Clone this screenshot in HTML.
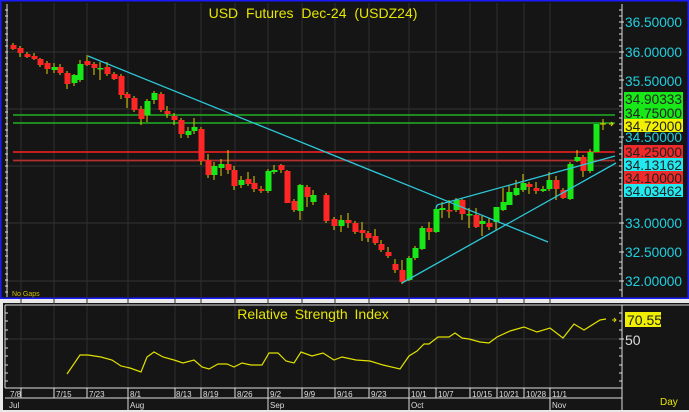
<!DOCTYPE html>
<html><head><meta charset="utf-8"><style>
html,body{margin:0;padding:0;background:#fff;}
svg{display:block;font-family:"Liberation Sans",sans-serif;}
</style></head><body>
<svg width="689" height="412" viewBox="0 0 689 412" xmlns="http://www.w3.org/2000/svg">
<rect x="0" y="0" width="689" height="412" fill="#151515"/>
<rect x="0.5" y="0.5" width="688" height="298" fill="none" stroke="#1a1aff" stroke-width="2"/>
<rect x="0" y="299" width="689" height="4" fill="#e8e8e8"/>
<rect x="0" y="410" width="689" height="2" fill="#e8e8e8"/>
<rect x="0" y="303" width="3" height="107" fill="#e8e8e8"/>
<g stroke="#333" stroke-width="1">
<line x1="5" y1="52" x2="620" y2="52"/><line x1="5" y1="109" x2="620" y2="109"/><line x1="5" y1="166" x2="620" y2="166"/><line x1="5" y1="223" x2="620" y2="223"/><line x1="5" y1="281" x2="620" y2="281"/>
<line x1="5" y1="339" x2="620" y2="339"/>
</g>
<g stroke="#2f2f2f" stroke-width="1">
<path d="M21 3V388M54 3V388M87 3V388M128 3V388M175 3V388M201 3V388M235 3V388M268 3V388M302 3V388M335 3V388M369 3V388M409 3V388M436 3V388M470 3V388M497 3V388M524 3V388M550 3V388"/>
</g>
<line x1="622" y1="4" x2="622" y2="297" stroke="#ddd"/>
<line x1="7" y1="4" x2="7" y2="297" stroke="#ddd"/>
<line x1="622" y1="305" x2="622" y2="410" stroke="#ddd"/>
<line x1="5" y1="305" x2="5" y2="388" stroke="#ddd"/>
<line x1="5" y1="388" x2="622" y2="388" stroke="#ddd"/>
<line x1="5" y1="305" x2="689" y2="305" stroke="#ddd"/>
<g stroke="#ddd">
<path d="M5 10h3M5 16h3M5 22h3M5 28h3M5 34h3M5 40h3M5 46h3M5 52h3M5 58h3M5 64h3M5 70h3M5 76h3M5 82h3M5 88h3M5 94h3M5 100h3M5 106h3M5 112h3M5 118h3M5 124h3M5 130h3M5 136h3M5 142h3M5 148h3M5 154h3M5 160h3M5 166h3M5 172h3M5 178h3M5 184h3M5 190h3M5 196h3M5 202h3M5 208h3M5 214h3M5 220h3M5 226h3M5 232h3M5 238h3M5 244h3M5 250h3M5 256h3M5 262h3M5 268h3M5 274h3M5 280h3M5 286h3M5 292h3"/>
<path d="M619 10h3M619 16h3M619 22h5M619 28h3M619 34h3M619 40h3M619 46h3M619 52h5M619 58h3M619 64h3M619 70h3M619 76h3M619 80h5M619 88h3M619 94h3M619 100h3M619 106h3M619 112h3M619 118h3M619 124h3M619 130h3M619 137h5M619 142h3M619 148h3M619 154h3M619 160h3M619 166h3M619 172h3M619 178h3M619 184h3M619 190h3M619 196h3M619 202h3M619 208h3M619 214h3M619 223h5M619 232h3M619 238h3M619 244h3M619 252h5M619 262h3M619 268h3M619 274h3M619 281h5M619 290h3"/>
<path d="M5 313h3M5 321h3M5 330h3M5 339h3M5 348h3M5 356h3M5 365h3M5 373h3M5 381h3M619 313h3M619 321h3M619 330h3M619 339h5M619 348h3M619 356h3M619 365h3M619 373h3M619 381h3"/>
</g>
<line x1="13" y1="115" x2="615" y2="115" stroke="#22b022" stroke-width="1.5"/>
<line x1="13" y1="123" x2="615" y2="123" stroke="#22b022" stroke-width="1.5"/>
<line x1="13" y1="152" x2="615" y2="152" stroke="#ff2020" stroke-width="1.5"/>
<line x1="13" y1="160.5" x2="615" y2="160.5" stroke="#b03030" stroke-width="1.8"/>
<g stroke="#e0d000" stroke-width="1">
<path d="M13 43V50M20 46V57M27 52V58M34 53V60M40 58V67M47 61V74M54 63V73M60 64V75M67 71V89M74 74V86M80 60V82M87 55V66M94 62V75M100 62V80M107 62V76M114 72V80M121 74V99M127 92V108M134 96V112M141 106V125M147 99V122M154 91V104M161 92V112M167 106V118M174 113V125M181 118V138M188 127V138M194 118V134M201 127V165M208 154V178M214 162V180M221 159V176M228 150V174M234 166V190M241 176V188M248 172V186M254 176V192M261 186V193M268 169V193M274 165V174M281 164V173M287 170V203M294 199V212M300 184V220M307 185V207M313 190V205M326 193V223M334 217V230M341 215V232M348 213V228M355 221V234M362 222V241M368 231V242M375 229V245M381 240V252M388 247V258M395 259V273M402 260V284M409 256V281M415 246V260M422 226V250M429 222V240M436 207V233M442 202V218M449 200V218M456 198V212M462 199V220M469 208V228M476 208V228M482 216V236M489 218V230M496 207V230M503 188V211M509 186V205M516 180V196M523 174V192M529 182V194M536 182V194M543 186V192M549 172V191M556 176V200M563 188V199M570 162V200M577 150V162M583 155V177M590 149V173M596 124V152M603 119V130"/>
</g>
<g fill="#ff2626">
<rect x="10.5" y="45" width="6" height="4"/><rect x="17.5" y="48" width="6" height="5"/><rect x="24.5" y="54" width="6" height="3"/><rect x="31.5" y="56" width="6" height="3"/><rect x="37.5" y="59" width="6" height="6"/><rect x="44.5" y="63" width="6" height="6"/><rect x="57.5" y="67" width="6" height="6"/><rect x="64.5" y="73" width="6" height="11"/><rect x="84.5" y="61" width="6" height="4"/><rect x="91.5" y="64" width="6" height="4"/><rect x="104.5" y="67" width="6" height="7"/><rect x="111.5" y="74" width="6" height="5"/><rect x="118.5" y="76" width="6" height="19"/><rect x="124.5" y="94" width="6" height="4"/><rect x="131.5" y="98" width="6" height="12"/><rect x="138.5" y="109" width="6" height="10"/><rect x="158.5" y="94" width="6" height="16"/><rect x="164.5" y="111" width="6" height="3"/><rect x="171.5" y="116" width="6" height="4"/><rect x="178.5" y="120" width="6" height="14"/><rect x="198.5" y="129" width="6" height="32"/><rect x="205.5" y="160" width="6" height="15"/><rect x="225.5" y="164" width="6" height="6"/><rect x="231.5" y="170" width="6" height="16"/><rect x="245.5" y="179" width="6" height="5"/><rect x="251.5" y="183" width="6" height="6"/><rect x="258.5" y="189" width="6" height="2"/><rect x="278.5" y="165" width="6" height="5"/><rect x="284.5" y="171" width="6" height="32"/><rect x="291.5" y="201" width="6" height="9"/><rect x="304.5" y="187" width="6" height="10"/><rect x="323.5" y="195" width="6" height="26"/><rect x="331.5" y="219" width="6" height="7"/><rect x="345.5" y="220" width="6" height="3"/><rect x="352.5" y="223" width="6" height="9"/><rect x="359.5" y="230" width="6" height="3"/><rect x="365.5" y="233" width="6" height="5"/><rect x="372.5" y="236" width="6" height="7"/><rect x="378.5" y="244" width="6" height="6"/><rect x="385.5" y="252" width="6" height="4"/><rect x="392.5" y="264" width="6" height="6"/><rect x="399.5" y="270" width="6" height="12"/><rect x="426.5" y="228" width="6" height="4"/><rect x="446.5" y="210" width="6" height="1.5"/><rect x="459.5" y="200" width="6" height="14"/><rect x="473.5" y="215" width="6" height="12"/><rect x="486.5" y="223" width="6" height="4"/><rect x="526.5" y="184" width="6" height="3"/><rect x="533.5" y="188" width="6" height="3"/><rect x="553.5" y="180" width="6" height="9"/><rect x="560.5" y="190" width="6" height="8"/><rect x="580.5" y="157" width="6" height="14"/>
</g>
<g fill="#18e818">
<rect x="51.5" y="67" width="6" height="3"/><rect x="71.5" y="75" width="6" height="8"/><rect x="77.5" y="64" width="6" height="16"/><rect x="97.5" y="68" width="6" height="1.5"/><rect x="144.5" y="101" width="6" height="14"/><rect x="151.5" y="93" width="6" height="7"/><rect x="185.5" y="131" width="6" height="4"/><rect x="191.5" y="127" width="6" height="4"/><rect x="211.5" y="166" width="6" height="9"/><rect x="218.5" y="164" width="6" height="4"/><rect x="238.5" y="180" width="6" height="5"/><rect x="265.5" y="171" width="6" height="20"/><rect x="271.5" y="170" width="6" height="2"/><rect x="297.5" y="185" width="6" height="26"/><rect x="310.5" y="195" width="6" height="7"/><rect x="338.5" y="220" width="6" height="6"/><rect x="406.5" y="258" width="6" height="22"/><rect x="412.5" y="248" width="6" height="10"/><rect x="419.5" y="228" width="6" height="21"/><rect x="433.5" y="209" width="6" height="23"/><rect x="439.5" y="208" width="6" height="2"/><rect x="453.5" y="200" width="6" height="10"/><rect x="466.5" y="214" width="6" height="1.5"/><rect x="479.5" y="221" width="6" height="3"/><rect x="493.5" y="207" width="6" height="15"/><rect x="500.5" y="202" width="6" height="8"/><rect x="506.5" y="192" width="6" height="13"/><rect x="513.5" y="188" width="6" height="7"/><rect x="520.5" y="183" width="6" height="7"/><rect x="540.5" y="189" width="6" height="2"/><rect x="546.5" y="180" width="6" height="9"/><rect x="567.5" y="164" width="6" height="35"/><rect x="574.5" y="157" width="6" height="4"/><rect x="587.5" y="152" width="6" height="19"/><rect x="593.5" y="124" width="6" height="28"/>
</g>
<path d="M600 124h6" stroke="#e0d000"/>
<path d="M609 124h4M611 122l2 2-2 2" stroke="#e0d000" fill="none"/>
<g stroke="#2cc8d8" stroke-width="1.3" fill="none">
<line x1="88" y1="56" x2="548" y2="242"/>
<path d="M436 209Q436 204 441 204L615 156"/>
<line x1="402" y1="283" x2="616" y2="163"/>
</g>
<text x="313" y="18" fill="#e6e600" font-size="14" text-anchor="middle" word-spacing="4">USD Futures Dec-24 (USDZ24)</text>
<text x="12" y="296" fill="#d0c000" font-size="7">No Gaps</text>
<g font-size="14" fill="#20d0e0">
<text x="625" y="27" textLength="57" lengthAdjust="spacingAndGlyphs">36.50000</text><text x="625" y="57" textLength="57" lengthAdjust="spacingAndGlyphs">36.00000</text><text x="625" y="86" textLength="57" lengthAdjust="spacingAndGlyphs">35.50000</text><text x="625" y="142" textLength="57" lengthAdjust="spacingAndGlyphs">34.50000</text><text x="625" y="228" textLength="57" lengthAdjust="spacingAndGlyphs">33.00000</text><text x="625" y="257" textLength="57" lengthAdjust="spacingAndGlyphs">32.50000</text><text x="625" y="286" textLength="57" lengthAdjust="spacingAndGlyphs">32.00000</text>
</g>
<rect x="624" y="92" width="59" height="14" fill="#18e818"/><rect x="624" y="106" width="59" height="14" fill="#18e818"/><rect x="624" y="119" width="59" height="13" fill="#f0f000"/>
<rect x="624" y="145" width="59" height="13" fill="#ee2a2a"/><rect x="624" y="158" width="59" height="13" fill="#22e8f0"/><rect x="624" y="171" width="59" height="13" fill="#ee2a2a"/><rect x="624" y="184" width="59" height="13" fill="#22e8f0"/>
<g font-size="14" fill="#222">
<text x="625" y="104" textLength="57" lengthAdjust="spacingAndGlyphs">34.90333</text><text x="625" y="118" textLength="57" lengthAdjust="spacingAndGlyphs">34.75000</text><text x="625" y="131" textLength="57" lengthAdjust="spacingAndGlyphs">34.72000</text><text x="625" y="157" textLength="57" lengthAdjust="spacingAndGlyphs">34.25000</text><text x="625" y="170" textLength="57" lengthAdjust="spacingAndGlyphs">34.13162</text><text x="625" y="183" textLength="57" lengthAdjust="spacingAndGlyphs">34.10000</text><text x="625" y="196" textLength="57" lengthAdjust="spacingAndGlyphs">34.03462</text>
</g>
<text x="313" y="319" fill="#e6e600" font-size="14" text-anchor="middle" word-spacing="3">Relative Strength Index</text>
<polyline fill="none" stroke="#e0e000" stroke-width="1.2" points="67,374 80,355 88,355 101,357 112,360 121,366 130,368 141,372 147,357 154,352 163,357 174,360 183,363 194,360 202,367 209,369 218,364 227,364 234,367 242,363 251,365 262,365 269,353 278,353 286,361 294,363 301,352 312,356 323,353 334,360 342,357 356,360 370,361 383,365 400,369 409,356 417,351 424,344 429,344 438,337 449,337 455,333 462,338 469,339 480,342 489,343 497,337 510,331 524,327 537,332 550,328 563,338 574,324 584,330 600,320 606,319"/>
<path d="M612 320h4M614 318l2 2-2 2" stroke="#e0d000" fill="none"/>
<rect x="625" y="312" width="36" height="15" fill="#f0f000"/>
<text x="627" y="325" fill="#222" font-size="14">70.55</text>
<text x="625" y="345" fill="#ddd" font-size="14">50</text>
<line x1="5" y1="398" x2="622" y2="398" stroke="#ddd"/>
<g stroke="#ddd"><path d="M21 388v10M54 388v10M87 388v10M128 388v10M175 388v10M201 388v10M235 388v10M268 388v10M302 388v10M335 388v10M369 388v10M409 388v10M436 388v10M470 388v10M497 388v10M524 388v10M550 388v10M128 398v12M268 398v12M409 398v12M550 398v12"/></g>
<g font-size="8" fill="#ddd">
<text x="10" y="397">7/8</text><text x="56" y="397">7/15</text><text x="89" y="397">7/23</text><text x="130" y="397">8/1</text><text x="176" y="397">8/13</text><text x="203" y="397">8/19</text><text x="237" y="397">8/26</text><text x="270" y="397">9/2</text><text x="304" y="397">9/9</text><text x="337" y="397">9/16</text><text x="371" y="397">9/23</text><text x="411" y="397">10/1</text><text x="438" y="397">10/7</text><text x="472" y="397">10/15</text><text x="499" y="397">10/21</text><text x="526" y="397">10/28</text><text x="552" y="397">11/1</text>
<text x="9" y="408">Jul</text><text x="130" y="408">Aug</text><text x="270" y="408">Sep</text><text x="411" y="408">Oct</text><text x="552" y="408">Nov</text>
</g>
<text x="660" y="405" fill="#e6e600" font-size="10">Day</text>
</svg>
</body></html>
